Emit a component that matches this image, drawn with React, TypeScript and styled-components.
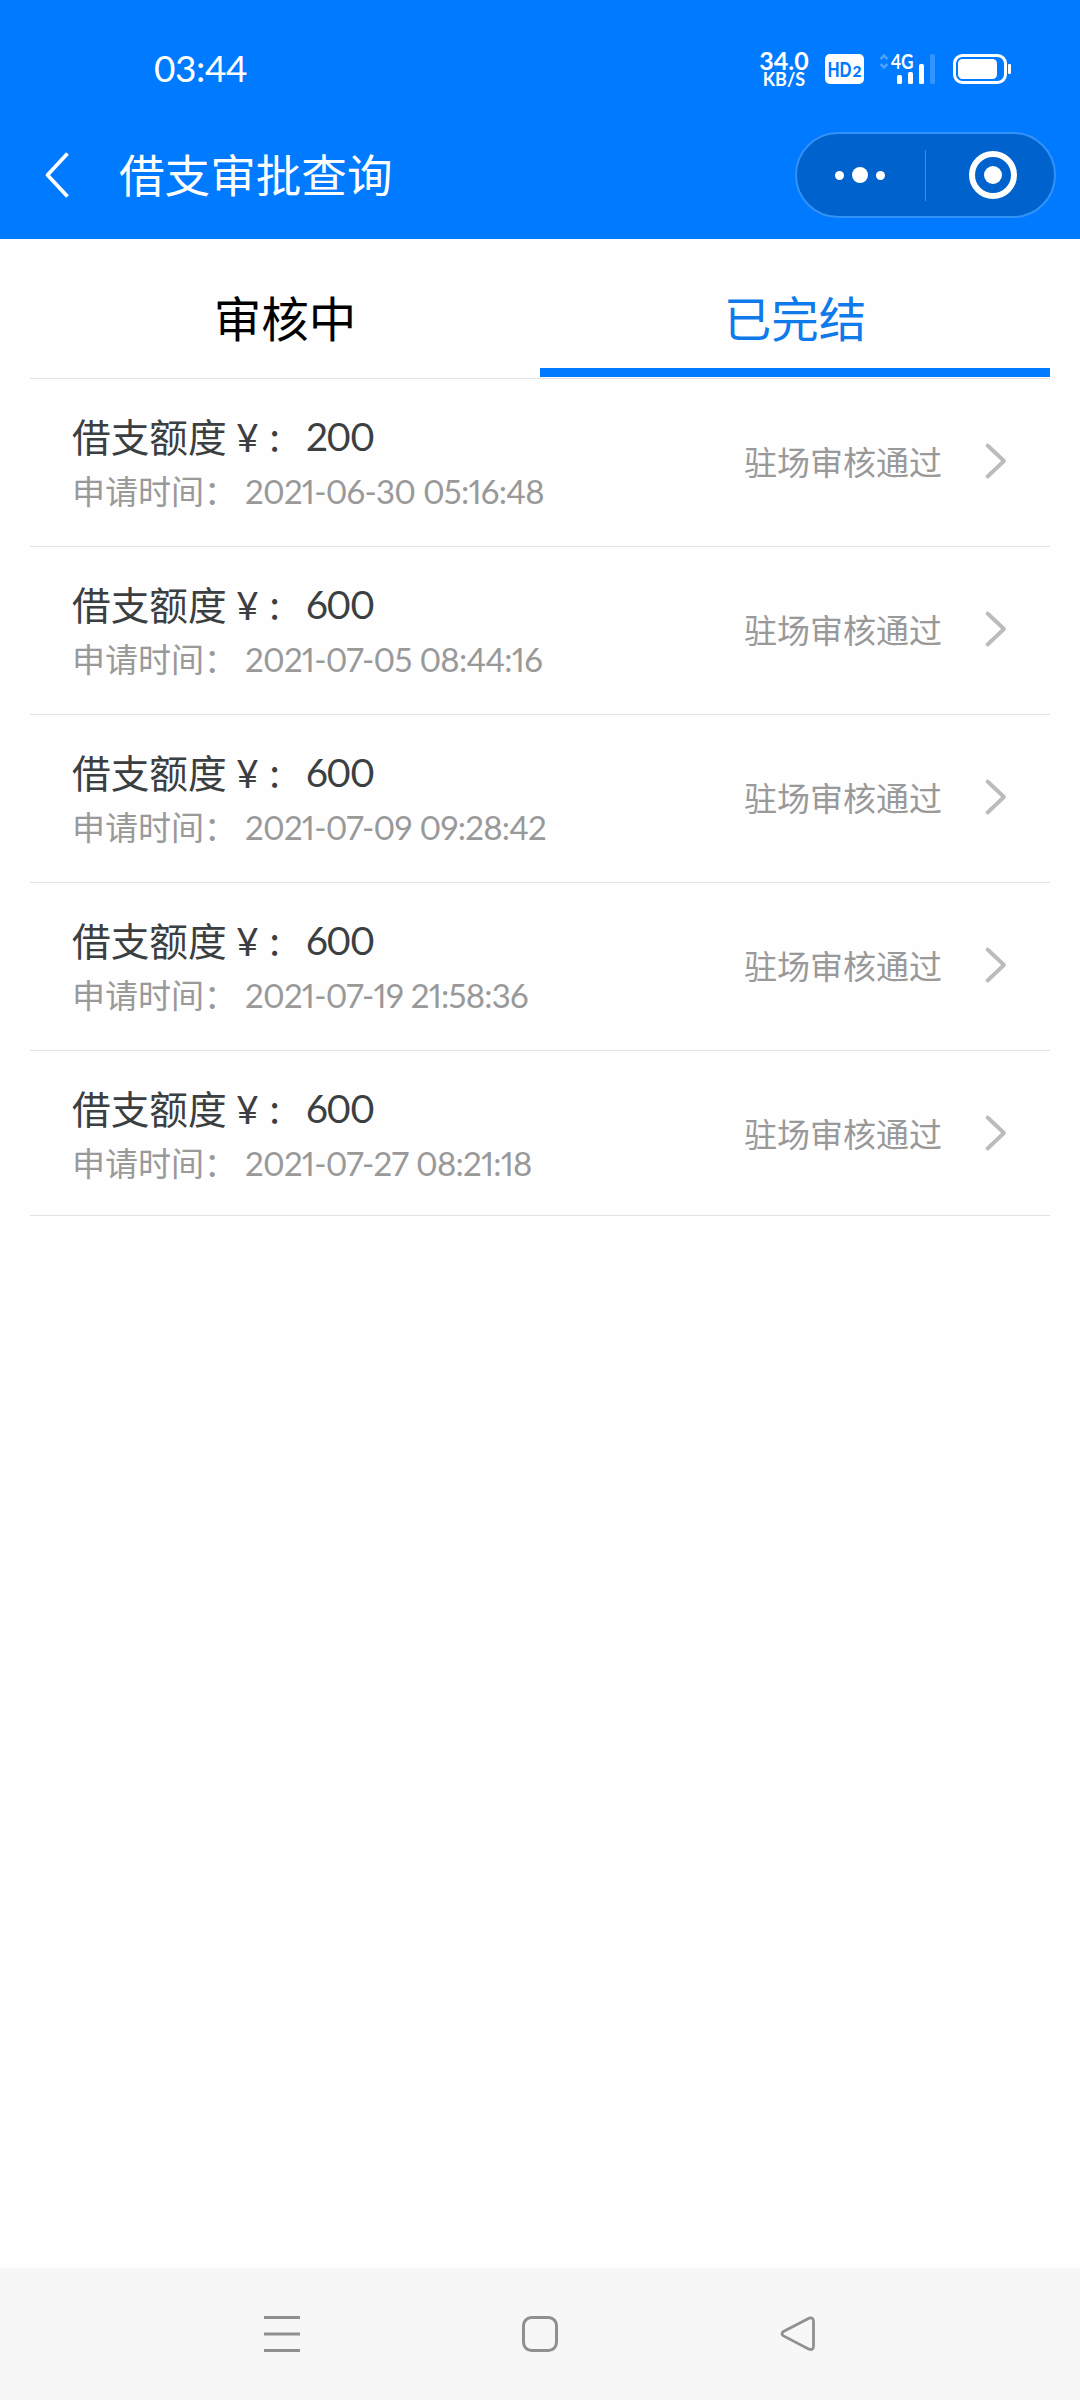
import React from "react";
import styled, { createGlobalStyle } from "styled-components";

const GlobalStyle = createGlobalStyle`
  * { box-sizing: border-box; }
  body { margin: 0; background: #fefefe; }
`;

const latin = `Lato, "Noto Sans CJK SC", sans-serif`;
const cjk = `"Noto Sans CJK SC", sans-serif`;

const Screen = styled.div`
  width: 1080px;
  height: 2400px;
  display: flex;
  flex-direction: column;
  background: #fefefe;
  font-family: ${cjk};
`;

const Header = styled.header`
  height: 239px;
  background: #007aff;
  color: #fff;
  display: flex;
  flex-direction: column;
`;

const StatusBar = styled.div`
  height: 129px;
  padding: 9px 69px 0 154px;
  display: flex;
  align-items: center;
  justify-content: space-between;
`;

const Clock = styled.span`
  font: 400 37px/50px ${latin};
  letter-spacing: -0.4px;
  margin-bottom: 2px;
`;

const StatusIcons = styled.div`
  display: flex;
  align-items: center;
`;

const Speed = styled.div`
  width: 52px;
  display: flex;
  flex-direction: column;
  align-items: center;
  font-family: ${latin};
  font-weight: 700;
  margin-right: 15px;
`;

const SpeedValue = styled.span`
  font-size: 25px;
  line-height: 20px;
`;

const SpeedUnit = styled.span`
  font-size: 18px;
  line-height: 19px;
`;

const HdBadge = styled.div`
  width: 39px;
  height: 30px;
  margin-right: 15px;
  border-radius: 5px;
  background: #fff;
  display: flex;
`;

const Signal = styled.div`
  width: 57px;
  height: 44px;
  margin-right: 17px;
  display: flex;
`;

const NavBar = styled.div`
  height: 92px;
  padding: 0 24px 0 44px;
  display: flex;
  align-items: center;
`;

const Title = styled.h1`
  flex: 1;
  margin: 0 0 4px 48px;
  font: 400 45.6px/60px ${cjk};
`;

const Capsule = styled.div`
  width: 261px;
  height: 86px;
  border-radius: 43px;
  border: 2px solid #3292f8;
  background: #0062cc;
  display: flex;
  align-items: center;
`;

const CapsuleHalf = styled.div<{ $width: number; $inset?: string }>`
  width: ${(p) => p.$width}px;
  padding: ${(p) => p.$inset ?? "0"};
  display: flex;
  align-items: center;
  justify-content: center;
  gap: 8px;
`;

const CapsuleDivider = styled.div`
  width: 1px;
  height: 51px;
  background: #3f8edf;
`;

const Dot = styled.span<{ $size: number }>`
  width: ${(p) => p.$size}px;
  height: ${(p) => p.$size}px;
  border-radius: 50%;
  background: #fff;
`;

const Ring = styled.span`
  width: 48px;
  height: 48px;
  border-radius: 50%;
  border: 6px solid #fff;
  display: flex;
  align-items: center;
  justify-content: center;
`;

const Content = styled.main`
  flex: 1;
  padding: 0 30px;
`;

const Tabs = styled.div`
  height: 140px;
  display: flex;
  border-bottom: 1px solid #e2e2e2;
`;

const Tab = styled.div<{ $active?: boolean }>`
  flex: 1;
  height: 138px;
  padding-top: 43px;
  text-align: center;
  font-size: 47.5px;
  line-height: 70px;
  color: ${(p) => (p.$active ? "#0f7aeb" : "#000")};
  border-bottom: ${(p) => (p.$active ? "9px solid #007aff" : "0")};
`;

const Row = styled.div`
  height: 168px;
  padding: 0 42px;
  display: flex;
  align-items: flex-start;
  border-bottom: 1px solid #e2e2e2;
  &:last-child { height: 165px; }
`;

const Info = styled.div`
  flex: 1;
  padding-top: 28px;
`;

const Line = styled.div<{ $primary?: boolean }>`
  display: flex;
  height: ${(p) => (p.$primary ? 59 : 50)}px;
  line-height: ${(p) => (p.$primary ? 58 : 50)}px;
  font-size: ${(p) => (p.$primary ? 38.7 : 33)}px;
  color: ${(p) => (p.$primary ? "#3b3f42" : "#999")};
`;

const Label = styled.span<{ $width: number }>`
  width: ${(p) => p.$width}px;
  margin-top: -1px;
  white-space: pre;
`;

const Yen = styled.span`
  font-family: ${latin};
  font-size: 38.7px;
  margin: 0 10.500px 0 9.500px;
`;

const Value = styled.span<{ $tracking: number }>`
  font-family: ${latin};
  font-variant-numeric: proportional-nums;
  letter-spacing: ${(p) => p.$tracking}px;
`;

const Status = styled.span`
  margin: 57px 42px 0 0;
  line-height: 50px;
  font-size: 33px;
  color: #999;
`;

const Chevron = styled.svg`
  margin-top: 63px;
`;

const SystemBar = styled.footer`
  height: 132px;
  padding: 0 153px;
  background: #f7f7f7;
  display: flex;
  align-items: center;
`;

const SystemKey = styled.div`
  flex: 1;
  display: flex;
  justify-content: center;
`;

const records = [
  { amount: "200", time: "2021-06-30 05:16:48" },
  { amount: "600", time: "2021-07-05 08:44:16" },
  { amount: "600", time: "2021-07-09 09:28:42" },
  { amount: "600", time: "2021-07-19 21:58:36" },
  { amount: "600", time: "2021-07-27 08:21:18" },
];

export default function App() {
  return (
    <>
      <GlobalStyle />
      <Screen>
        <Header>
          <StatusBar>
            <Clock>03:44</Clock>
            <StatusIcons>
              <Speed>
                <SpeedValue>34.0</SpeedValue>
                <SpeedUnit>KB/S</SpeedUnit>
              </Speed>
              <HdBadge>
                <svg width="39" height="30" viewBox="0 0 39 30" fill="#007aff" fontFamily="Lato, sans-serif" fontWeight="900">
                  <text x="2.500" y="22.500" fontSize="21" textLength="24" lengthAdjust="spacingAndGlyphs">HD</text>
                  <text x="27.500" y="22.500" fontSize="14.500" textLength="9" lengthAdjust="spacingAndGlyphs">2</text>
                </svg>
              </HdBadge>
              <Signal>
                <svg width="57" height="44" viewBox="0 -6 57 44">
                  <path d="M1.500 6 5 2.500 8.500 6M1.500 11 5 14.500 8.500 11" fill="none" stroke="#4da2ff" strokeWidth="2.500" />
                  <text x="12" y="15.500" fill="#fff" fontFamily="Lato, sans-serif" fontWeight="700" fontSize="20" textLength="22.500" lengthAdjust="spacingAndGlyphs">4G</text>
                  <rect x="18" y="22" width="5" height="9" rx="1.500" fill="#fff" />
                  <rect x="29" y="19" width="5" height="12" rx="1.500" fill="#fff" />
                  <rect x="40" y="11" width="5" height="20" rx="1.500" fill="#fff" />
                  <rect x="51" y="1" width="5" height="30" rx="1.500" fill="#3395ff" />
                </svg>
              </Signal>
              <svg width="58" height="30" viewBox="0 0 58 30">
                <rect x="1.500" y="1.500" width="51" height="27" rx="8" fill="none" stroke="#fff" strokeWidth="3" />
                <rect x="5" y="5" width="39" height="20" rx="4.500" fill="#fff" />
                <rect x="55" y="10" width="3" height="10" rx="1" fill="#fff" />
              </svg>
            </StatusIcons>
          </StatusBar>
          <NavBar>
            <svg width="27" height="48" viewBox="0 0 27 48">
              <path d="M23.500 2.500 3.500 24 23.500 45.500" fill="none" stroke="#fff" strokeWidth="3.800" strokeLinejoin="round" />
            </svg>
            <Title>借支审批查询</Title>
            <Capsule>
              <CapsuleHalf $width={128} $inset="0 2px 0 0">
                <Dot $size={9} />
                <Dot $size={16} />
                <Dot $size={9} />
              </CapsuleHalf>
              <CapsuleDivider />
              <CapsuleHalf $width={128} $inset="0 0 0 6px">
                <Ring>
                  <Dot $size={18} />
                </Ring>
              </CapsuleHalf>
            </Capsule>
          </NavBar>
        </Header>
        <Content>
          <Tabs>
            <Tab>审核中</Tab>
            <Tab $active>已完结</Tab>
          </Tabs>
          {records.map((r) => (
            <Row key={r.time}>
              <Info>
                <Line $primary>
                  <Label $width={234}>
                    借支额度<Yen>¥</Yen>:
                  </Label>
                  <Value $tracking={-1.8}>{r.amount}</Value>
                </Line>
                <Line>
                  <Label $width={173}>申请时间：</Label>
                  <Value $tracking={-0.76}>{r.time}</Value>
                </Line>
              </Info>
              <Status>驻场审核通过</Status>
              <Chevron width="24" height="38" viewBox="0 0 24 38">
                <path d="M3.600 3.500 20 19 3.600 34.500" fill="none" stroke="#bbb" strokeWidth="3.800" strokeLinecap="round" strokeLinejoin="round" />
              </Chevron>
            </Row>
          ))}
        </Content>
        <SystemBar>
          <SystemKey>
            <svg width="38" height="38" viewBox="0 0 38 38">
              <path d="M1 2.500H37M1 19H37M1 35.500H37" stroke="#909090" strokeWidth="3" />
            </svg>
          </SystemKey>
          <SystemKey>
            <svg width="38" height="38" viewBox="0 0 38 38">
              <rect x="2.500" y="2.500" width="33" height="33" rx="8" fill="none" stroke="#909090" strokeWidth="3" />
            </svg>
          </SystemKey>
          <SystemKey>
            <svg width="38" height="38" viewBox="0 0 38 38">
              <path d="M30 3.200 4.500 16.500Q1.500 18.700 4.500 20.900L30 34.200Q34.500 35.500 34.500 31V6.400Q34.500 1.900 30 3.200Z" fill="none" stroke="#909090" strokeWidth="2.800" />
            </svg>
          </SystemKey>
        </SystemBar>
      </Screen>
    </>
  );
}
